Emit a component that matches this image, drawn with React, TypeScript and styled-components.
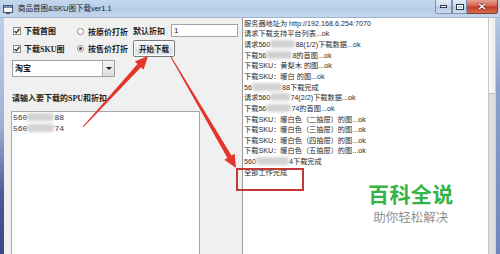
import styled, { createGlobalStyle } from "styled-components";

const GlobalStyle = createGlobalStyle`
  html, body { margin: 0; padding: 0; background: #4a5a96; }
  body { overflow: hidden; }
`;

const Window = styled.div`
  position: relative;
  width: 500px;
  height: 254px;
  overflow: hidden;
  display: flex;
  flex-direction: column;
  font-family: "Liberation Sans", "Noto Sans CJK SC", sans-serif;
  color: #1c1c1c;
`;

const TitleBar = styled.div`
  flex: none;
  height: 18px;
  display: flex;
  align-items: flex-start;
  background: linear-gradient(#c4d7ed, #b6cce6 55%, #c3d6ec);
  border-bottom: 1px solid #9fb4cf;
  box-sizing: border-box;
`;

const AppIcon = styled.svg`
  flex: none;
  margin: 5px 0 0 3px;
`;

const TitleText = styled.span`
  margin: 4px 0 0 5px;
  font-size: 7.5px;
  line-height: 10px;
  color: #1e1e1e;
  white-space: nowrap;
`;

const Controls = styled.div`
  margin-left: auto;
  margin-right: 2px;
  display: flex;
  height: 14px;
`;

const CtrlButton = styled.div<{ $close?: boolean; $w: number }>`
  width: ${(p) => p.$w}px;
  height: 14px;
  box-sizing: border-box;
  display: flex;
  align-items: center;
  justify-content: center;
  border: 1px solid ${(p) => (p.$close ? "#8d3b2e" : "#7d90ad")};
  border-top: none;
  border-left-width: ${(p) => (p.$close ? 0 : 1)}px;
  background: ${(p) =>
    p.$close
      ? "linear-gradient(#e6a393, #d4604a 48%, #c23c27 52%, #d46a50)"
      : "linear-gradient(#e3ebf5, #cad9eb 48%, #b6c9e1 52%, #cddcee)"};
  &:first-child { border-bottom-left-radius: 3px; }
  &:last-child { border-bottom-right-radius: 3px; }
`;

const Body = styled.div`
  flex: 1;
  display: flex;
  min-height: 0;
`;

const Frame = styled.div<{ $right?: boolean }>`
  flex: none;
  width: 4px;
  background: ${(p) =>
    p.$right
      ? "linear-gradient(#b6cbe5, #8aa0cc 30%, #6f86bd)"
      : "linear-gradient(#bdd0e8, #9db2d6 45%, #4b5a97 75%, #3c4785)"};
`;

const Client = styled.div`
  flex: 1;
  display: flex;
  background: #f0f0f0;
  min-width: 0;
`;

const LeftPanel = styled.div`
  flex: none;
  width: 238px;
  box-sizing: border-box;
  padding: 5px 0 0 7px;
  display: flex;
  flex-direction: column;
`;

const ControlGrid = styled.div`
  margin-left: 2px;
  display: grid;
  grid-template-columns: 64px 56px 38px 67px;
  grid-template-rows: 15px 17px;
  row-gap: 2px;
  align-items: center;
`;

const Option = styled.label<{ $drop?: number }>`
  display: flex;
  align-items: center;
  gap: 3px;
  margin-top: ${(p) => p.$drop ?? 0}px;
  font-size: 8px;
  font-weight: bold;
  white-space: nowrap;
  font-family: "Liberation Serif", "Noto Sans CJK SC", serif;
`;

const CheckBox = styled.span`
  width: 8px;
  height: 8px;
  box-sizing: border-box;
  border: 1px solid #8a8a8a;
  background: linear-gradient(135deg, #f4f4f4, #ffffff);
  display: flex;
  align-items: center;
  justify-content: center;
`;

const Radio = styled.span<{ $on?: boolean }>`
  width: 7px;
  height: 7px;
  box-sizing: border-box;
  border-radius: 50%;
  border: 1px solid #8a8a8a;
  background: #fff;
  display: flex;
  align-items: center;
  justify-content: center;
  margin-right: 1px;
  &::after {
    content: "";
    width: 3px;
    height: 3px;
    border-radius: 50%;
    background: ${(p) => (p.$on ? "#333" : "transparent")};
  }
`;

const FieldLabel = styled.span`
  font-size: 8px;
  font-weight: bold;
  white-space: nowrap;
  font-family: "Liberation Serif", "Noto Sans CJK SC", serif;
`;

const Input = styled.div`
  height: 13px;
  box-sizing: border-box;
  border: 1px solid #a3a3a3;
  background: #fff;
  font-size: 8px;
  line-height: 11px;
  padding-left: 2px;
`;

const StartButton = styled.div`
  grid-column: 3 / span 2;
  width: 42px;
  height: 17px;
  box-sizing: border-box;
  border: 1px solid #7a7a7a;
  border-radius: 2px;
  background: linear-gradient(#f6f8fa, #e6eaee 50%, #d6dde4 52%, #e4e9ee);
  box-shadow: inset 0 0 0 1px #fbfdff;
  display: flex;
  align-items: center;
  justify-content: center;
  font-size: 7.5px;
  font-weight: bold;
  font-family: "Liberation Serif", "Noto Sans CJK SC", serif;
`;

const Select = styled.div`
  margin: 3px 0 0 1px;
  width: 103px;
  height: 17px;
  box-sizing: border-box;
  border: 1px solid #a0a0a0;
  background: #fff;
  display: flex;
`;

const SelectValue = styled.span`
  flex: 1;
  padding-left: 2px;
  font-size: 8px;
  line-height: 15px;
  font-weight: bold;
  font-family: "Liberation Serif", "Noto Sans CJK SC", serif;
`;

const SelectArrow = styled.span`
  width: 11px;
  border-left: 1px solid #b5b5b5;
  background: linear-gradient(#f3f3f3, #dcdcdc);
  display: flex;
  align-items: center;
  justify-content: center;
  &::after {
    content: "";
    border-left: 3px solid transparent;
    border-right: 3px solid transparent;
    border-top: 3px solid #222;
  }
`;

const SectionLabel = styled(FieldLabel)`
  margin: 17px 0 0 1px;
  line-height: 10px;
`;

const SpuArea = styled.div`
  margin-top: 7px;
  width: 189px;
  flex: 1;
  box-sizing: border-box;
  border: 1px solid #a8a8a8;
  border-bottom: none;
  background: #fff;
  padding: 0 0 0 1px;
  font-family: "Liberation Mono", "Noto Sans CJK SC", monospace;
  font-size: 8px;
  line-height: 11.5px;
  color: #333;
`;

const LogArea = styled.div`
  position: relative;
  flex: 1;
  box-sizing: border-box;
  border-left: 1px solid #9a9a9a;
  background: #fff;
  padding: 0.6px 0 0 1px;
  font-size: 7.2px;
  line-height: 10.67px;
  color: #2a2a2a;
  min-width: 0;
`;

const Line = styled.div`
  white-space: nowrap;
  height: 10.67px;
`;

const Blur = styled.span<{ $w: number }>`
  display: inline-block;
  vertical-align: middle;
  width: ${(p) => p.$w}px;
  height: 8px;
  margin-top: -2px;
  background: #d2d2d2;
  border-radius: 3px;
  filter: blur(1.6px);
`;

const Watermark = styled.div`
  position: absolute;
  left: 125px;
  top: 161px;
  display: flex;
  flex-direction: column;
  align-items: center;
  gap: 2px;
  font-family: "Noto Sans CJK SC", sans-serif;
`;

const MarkTitle = styled.span`
  font-size: 21px;
  line-height: 28px;
  font-weight: bold;
  color: #33b446;
  letter-spacing: 0.4px;
`;

const MarkSub = styled.span`
  font-size: 12.5px;
  line-height: 16px;
  color: #8f8f8f;
`;

const ScrollTrack = styled.div`
  flex: none;
  width: 8px;
  box-sizing: border-box;
  border-left: 1px solid #c6c6c6;
  border-right: 1px solid #cfcfcf;
  background: #dedede;
`;

const ScrollThumb = styled.div`
  height: 75px;
  background: linear-gradient(90deg, #fafafa, #ececec);
  border-bottom: 1px solid #c4c4c4;
`;

const Annotations = styled.svg`
  position: absolute;
  left: 0;
  top: 0;
  pointer-events: none;
`;

function arrowPoints(tx: number, ty: number, px: number, py: number) {
  const dx = px - tx;
  const dy = py - ty;
  const len = Math.hypot(dx, dy);
  const ux = dx / len;
  const uy = dy / len;
  const nx = -uy;
  const ny = ux;
  const head = 13;
  const wing = 6;
  const shaft = 2.4;
  const tail = 0.5;
  const bx = px - ux * head;
  const by = py - uy * head;
  const pts = [
    [tx + nx * tail, ty + ny * tail],
    [bx + nx * shaft, by + ny * shaft],
    [bx + nx * wing, by + ny * wing],
    [px, py],
    [bx - nx * wing, by - ny * wing],
    [bx - nx * shaft, by - ny * shaft],
    [tx - nx * tail, ty - ny * tail],
  ];
  return pts.map((p) => p.map((v) => v.toFixed(1)).join(",")).join(" ");
}

const Check = () => (
  <svg width="6" height="6" viewBox="0 0 6 6">
    <path d="M0.6 3.1 L2.3 4.8 L5.4 1" fill="none" stroke="#2b2b2b" strokeWidth="1.3" />
  </svg>
);

export default function App() {
  return (
    <>
      <GlobalStyle />
      <Window>
        <TitleBar>
          <AppIcon width="10" height="9" viewBox="0 0 10 9">
            <rect x="0.5" y="0.5" width="9" height="7" fill="#f4f6f8" stroke="#4b5560" />
            <rect x="1" y="1" width="8" height="2" fill="#6c8fbf" />
            <rect x="3" y="8" width="4" height="1" fill="#4b5560" />
          </AppIcon>
          <TitleText>商品首图&amp;SKU图下载ver1.1</TitleText>
          <Controls>
            <CtrlButton $w={17}>
              <svg width="7" height="3" viewBox="0 0 7 3">
                <rect x="0.5" y="0.5" width="6" height="2" fill="#fff" stroke="#2c3a52" />
              </svg>
            </CtrlButton>
            <CtrlButton $w={15}>
              <svg width="8" height="6" viewBox="0 0 8 6">
                <rect x="0.5" y="0.5" width="7" height="5" fill="none" stroke="#2c3a52" />
                <rect x="1.5" y="1.5" width="5" height="3" fill="none" stroke="#fff" />
              </svg>
            </CtrlButton>
            <CtrlButton $w={31} $close>
              <svg width="8" height="7" viewBox="0 0 8 7">
                <path d="M1 1 L7 6 M7 1 L1 6" stroke="#5a1a12" strokeWidth="2.6" />
                <path d="M1 1 L7 6 M7 1 L1 6" stroke="#fff" strokeWidth="1.6" />
              </svg>
            </CtrlButton>
          </Controls>
        </TitleBar>
        <Body>
          <Frame />
          <Client>
            <LeftPanel>
              <ControlGrid>
                <Option>
                  <CheckBox><Check /></CheckBox>下载首图
                </Option>
                <Option $drop={2}>
                  <Radio />按原价打折
                </Option>
                <FieldLabel>默认折扣</FieldLabel>
                <Input>1</Input>
                <Option>
                  <CheckBox><Check /></CheckBox>下载SKU图
                </Option>
                <Option>
                  <Radio $on />按售价打折
                </Option>
                <StartButton>开始下载</StartButton>
              </ControlGrid>
              <Select>
                <SelectValue>淘宝</SelectValue>
                <SelectArrow />
              </Select>
              <SectionLabel>请输入要下载的SPU和折扣</SectionLabel>
              <SpuArea>
                <Line>560<Blur $w={27} />88</Line>
                <Line>560<Blur $w={27} />74</Line>
              </SpuArea>
            </LeftPanel>
            <LogArea>
              <Line>服务器地址为 http://192.168.6.254:7070</Line>
              <Line>请求下载支持平台列表...ok</Line>
              <Line>请求560<Blur $w={25} />88(1/2)下载数据...ok</Line>
              <Line>下载56<Blur $w={26} />8的首图...ok</Line>
              <Line>下载SKU：黄梨木 的图...ok</Line>
              <Line>下载SKU：暖白 的图...ok</Line>
              <Line>56<Blur $w={30} />88下载完成</Line>
              <Line>请求560<Blur $w={20} />74(2/2)下载数据...ok</Line>
              <Line>下载56<Blur $w={25} />74的首图...ok</Line>
              <Line>下载SKU：暖白色（二抽屉）的图...ok</Line>
              <Line>下载SKU：暖白色（三抽屉）的图...ok</Line>
              <Line>下载SKU：暖白色（四抽屉）的图...ok</Line>
              <Line>下载SKU：暖白色（五抽屉）的图...ok</Line>
              <Line>560<Blur $w={33} />4下载完成</Line>
              <Line>全部工作完成</Line>
              <Watermark>
                <MarkTitle>百科全说</MarkTitle>
                <MarkSub>助你轻松解决</MarkSub>
              </Watermark>
            </LogArea>
            <ScrollTrack>
              <ScrollThumb />
            </ScrollTrack>
          </Client>
          <Frame $right />
        </Body>
        <Annotations width="500" height="254" viewBox="0 0 500 254">
          <polygon points={arrowPoints(83, 127, 148, 56)} fill="#e4352b" />
          <polygon points={arrowPoints(171, 57, 236, 168)} fill="#e4352b" />
          <rect x="237" y="169" width="66" height="21" fill="none" stroke="#c23a35" strokeWidth="2" />
        </Annotations>
      </Window>
    </>
  );
}
